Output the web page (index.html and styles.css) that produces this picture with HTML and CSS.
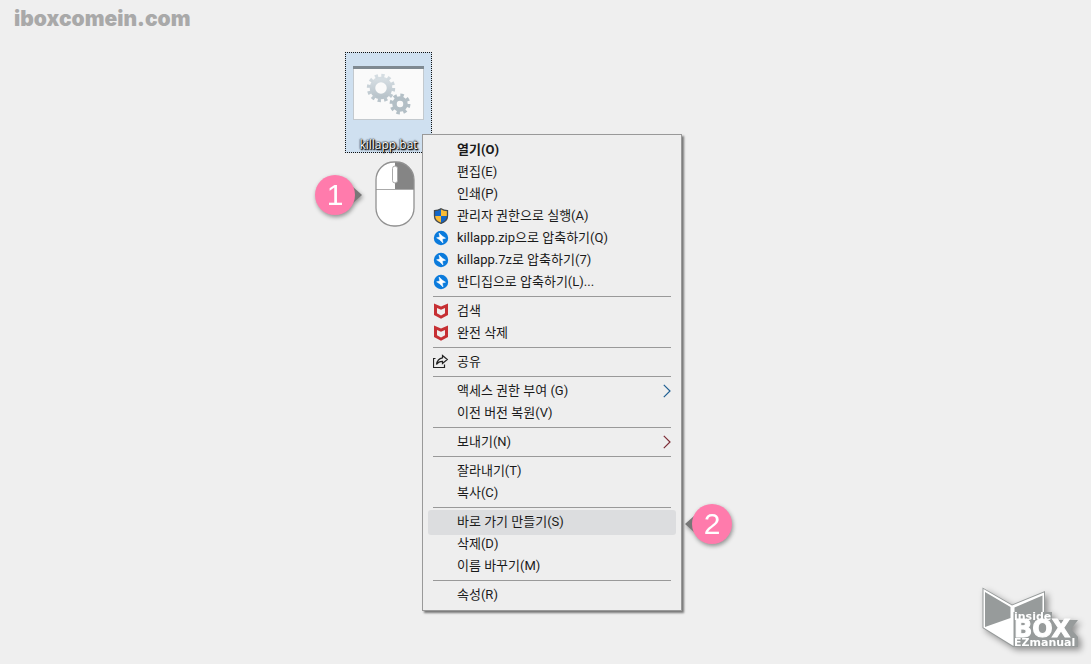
FILE: index.html
```html
<!DOCTYPE html>
<html lang="ko">
<head>
  <meta charset="UTF-8">
  <meta name="viewport" content="width=device-width, initial-scale=1.0">
  <title>killapp.bat</title>
  <link rel="stylesheet" href="styles.css">
</head>
<body>

  <!-- shared icons -->
  <svg class="sprite" aria-hidden="true">
    <symbol id="shield" viewBox="0 0 16 16">
      <path d="M8 0.5C6 2 4 2.5 1.5 2.5V8C1.5 11.5 4 14 8 15.5C12 14 14.5 11.5 14.5 8V2.5C12 2.5 10 2 8 .5z" fill="#fbbc35"/>
      <path d="M8 .5C6 2 4 2.500 1.500 2.500V8H8zM8 8H14.500C14.500 11.500 12 14 8 15.500z" fill="#1467c8"/>
      <path d="M8 .8C6 2.200 4 2.700 1.500 2.700V8C1.500 11.500 4 14 8 15.300C12 14 14.500 11.500 14.500 8V2.700C12 2.700 10 2.200 8 .8z" fill="none" stroke="#444a50" stroke-width="1.300"/>
    </symbol>
    <symbol id="bandizip" viewBox="0 0 16 16">
      <circle cx="8" cy="8" r="7.200" fill="#0b7bdc"/>
      <path d="M6 3L9.500 6.300L12.500 8.200L9.300 9L10 13L6.600 9.700L3.600 7.800L6.800 7z" fill="#fff" stroke="#fff" stroke-width=".5"/>
    </symbol>
    <symbol id="mcafee" viewBox="0 0 16 16">
      <path d="M1 .5L8 3.500L15 .5V12L8 15.800L1 12z" fill="#c62f33"/>
      <path d="M4 5L8 6.800L12 5V10.300L8 12.400L4 10.300z" fill="#eee"/>
    </symbol>
    <symbol id="share" viewBox="0 0 16 16">
      <path d="M.5 4.500V13.500H11.500V10.500M.5 13.500V4.500H2.500" fill="none" stroke="#222" stroke-width="1.200"/>
      <path d="M9.500 1.500L14.300 5.500L9.500 9.500V7.300C7 7.300 5 8 3.500 10.500C4 7 6 4.300 9.500 3.800z" fill="none" stroke="#222" stroke-width="1.200"/>
    </symbol>
    <symbol id="chevron" viewBox="0 0 8 14">
      <path d="M.8 .8L7 7L.8 13.200" fill="none" stroke="currentColor" stroke-width="1.200"/>
    </symbol>
  </svg>

  <main class="desktop">
    <a class="site-name" href="#">iboxcomein.com</a>

    <button class="file" type="button">
      <svg class="file-icon" viewBox="0 0 71 54" aria-hidden="true">
        <defs>
          <linearGradient id="gear" x1="0" y1="0" x2="0" y2="1">
            <stop offset="0" stop-color="#d5dde2"/>
            <stop offset="1" stop-color="#b9c4cb"/>
          </linearGradient>
        </defs>
        <rect x=".5" y=".5" width="70" height="53" fill="#fafafa" stroke="#c3c9ce"/>
        <rect width="71" height="3" fill="#7f8991"/>
        <g fill="none" stroke="url(#gear)">
          <circle cx="28" cy="22" r="8.500" stroke-width="5.500"/>
          <circle cx="28" cy="22" r="12.200" stroke-width="4" stroke-dasharray="3.190 3.190"/>
        </g>
        <g fill="none" stroke="#b3bfc6">
          <circle cx="47" cy="38" r="5.500" stroke-width="4.500"/>
          <circle cx="47" cy="38" r="8.700" stroke-width="3.500" stroke-dasharray="3.420 3.420"/>
        </g>
      </svg>
      <span class="file-name">killapp.bat</span>
    </button>

    <svg class="mouse" viewBox="0 0 40 66" aria-hidden="true">
      <rect x="1" y="1" width="38" height="64" rx="18" fill="#fff"/>
      <path d="M20 1H21A18 18 0 0 1 39 19V28H20z" fill="#858585"/>
      <path d="M1 28.500H39" stroke="#aaa"/>
      <rect x="1" y="1" width="38" height="64" rx="18" fill="none" stroke="#919191" stroke-width="1.300"/>
      <rect x="17.500" y="5" width="5" height="17" rx="2.500" fill="#fff" stroke="#aaa"/>
    </svg>

    <div class="step step-one"><span>1</span></div>
    <div class="step step-two"><span>2</span></div>

    <ul class="context-menu">
      <li><button class="default" type="button">열기(O)</button></li>
      <li><button type="button">편집(E)</button></li>
      <li><button type="button">인쇄(P)</button></li>
      <li><button type="button"><svg class="icon"><use href="#shield"/></svg>관리자 권한으로 실행(A)</button></li>
      <li><button type="button"><svg class="icon"><use href="#bandizip"/></svg>killapp.zip으로 압축하기(Q)</button></li>
      <li><button type="button"><svg class="icon"><use href="#bandizip"/></svg>killapp.7z로 압축하기(7)</button></li>
      <li><button type="button"><svg class="icon"><use href="#bandizip"/></svg>반디집으로 압축하기(L)...</button></li>
      <li class="separator"></li>
      <li><button type="button"><svg class="icon"><use href="#mcafee"/></svg>검색</button></li>
      <li><button type="button"><svg class="icon"><use href="#mcafee"/></svg>완전 삭제</button></li>
      <li class="separator"></li>
      <li><button type="button"><svg class="icon"><use href="#share"/></svg>공유</button></li>
      <li class="separator"></li>
      <li><button type="button">액세스 권한 부여 (G)<svg class="chevron blue"><use href="#chevron"/></svg></button></li>
      <li><button type="button">이전 버전 복원(V)</button></li>
      <li class="separator"></li>
      <li><button type="button">보내기(N)<svg class="chevron red"><use href="#chevron"/></svg></button></li>
      <li class="separator"></li>
      <li><button type="button">잘라내기(T)</button></li>
      <li><button type="button">복사(C)</button></li>
      <li class="separator"></li>
      <li><button class="selected" type="button">바로 가기 만들기(S)</button></li>
      <li><button type="button">삭제(D)</button></li>
      <li><button type="button">이름 바꾸기(M)</button></li>
      <li class="separator"></li>
      <li><button type="button">속성(R)</button></li>
    </ul>

    <svg class="box-logo" viewBox="0 0 100 70" role="img" aria-label="inside BOX EZmanual">
      <path d="M.5 .5L30 17.500L63 4V25H70V33H96L89 42L96 50V60H31L.5 41z" fill="#979b9b"/>
      <path d="M1.500 2L30 18.500L62 5.500V25H31.500V59L1.500 40.500z" fill="#fff"/>
      <path d="M3 5L28.500 20V31L3 40zM32.500 20.500L60.500 8.500V25H32.500zM32 25H70V60H32z" fill="#979b9b"/>
      <g class="logo-text">
        <text x="32" y="33" font-size="11">inside</text>
        <text class="logo-box" x="32" y="50" font-size="24">BOX</text>
        <text x="32" y="59" font-size="11">EZmanual</text>
      </g>
    </svg>
  </main>

</body>
</html>
```
FILE: styles.css
```css
* {
  box-sizing: border-box;
}

body {
  margin: 0;
  background-color: #efefef;
  color: #1a1a1a;
  font-family: Roboto, "Noto Sans CJK KR", sans-serif;
  font-size: 13px;
}

button {
  font: inherit;
  color: inherit;
  border: none;
  background: none;
  padding: 0;
}

.sprite {
  position: absolute;
  width: 0;
  height: 0;
}

.desktop {
  position: relative;
  min-height: 100vh;
  padding: 7px 14px;
  overflow: hidden;
}

.site-name {
  color: #a9a9a9;
  font-family: Inter, sans-serif;
  font-size: 21px;
  font-weight: 900;
  line-height: 24px;
  text-decoration: none;
}

/* selected file */
.file {
  position: absolute;
  left: 345px;
  top: 52px;
  width: 87px;
  height: 101px;
  padding: 13px 0 0;
  display: flex;
  flex-direction: column;
  align-items: center;
  gap: 16px;
  background-color: #cfe0f0;
  border: 1px dotted #111;
}

.file-icon {
  flex-shrink: 0;
  width: 71px;
  height: 54px;
}

.file-name {
  color: #fff;
  font-family: "Open Sans", sans-serif;
  font-size: 12px;
  line-height: 18px;
  text-shadow: 0 0 1px #000, 1px 1px 1px #000, 0 0 2px #000, 1px 1px 2px #000;
}

.mouse {
  position: absolute;
  left: 375px;
  top: 161px;
  width: 40px;
  height: 66px;
}

/* numbered steps */
.step {
  position: absolute;
  width: 40px;
  height: 40px;
  filter: drop-shadow(1px 2px 2px rgba(0, 0, 0, 0.4));
}

.step span {
  position: relative;
  display: block;
  border-radius: 50%;
  background-color: #ff7bac;
  color: #fff;
  font-family: "Liberation Sans", sans-serif;
  font-size: 30px;
  line-height: 40px;
  text-align: center;
}

.step::before {
  content: "";
  position: absolute;
  top: 4px;
  width: 18px;
  height: 32px;
  background-color: #777;
}

.step-one {
  left: 315px;
  top: 175px;
}

.step-one::before {
  right: -7px;
  clip-path: polygon(0 0, 100% 50%, 0 100%);
}

.step-two {
  left: 692px;
  top: 504px;
}

.step-two::before {
  left: -7px;
  clip-path: polygon(100% 0, 0 50%, 100% 100%);
}

/* right click menu */
.context-menu {
  position: absolute;
  left: 422px;
  top: 134px;
  width: 260px;
  margin: 0;
  padding: 3px 5px 5px;
  list-style: none;
  background-color: #eee;
  border: 1px solid #999;
  box-shadow: 2px 2px 2px #777;
}

.context-menu button {
  position: relative;
  display: flex;
  align-items: center;
  width: 100%;
  height: 22px;
  padding-left: 29px;
  padding-bottom: 1px;
  border-radius: 3px;
  text-align: left;
}

.context-menu button:hover {
  background-color: #dcdddf;
}

.context-menu .default {
  font-weight: 700;
}

.context-menu .selected {
  height: 25px;
  margin-bottom: -3px;
  padding-bottom: 4px;
  background-color: #dcdddf;
}

.separator {
  height: 7px;
  margin: 0 5px;
  padding-top: 4px;
}

.separator::before {
  content: "";
  display: block;
  height: 1px;
  background-color: #999;
}

.icon {
  width: 16px;
  height: 16px;
  margin-top: 2px;
  margin-left: -24px;
  margin-right: 8px;
}

.chevron {
  width: 8px;
  height: 14px;
  margin-top: 2px;
  margin-left: auto;
  margin-right: 5px;
}

.blue {
  color: #1f5f92;
}

.red {
  color: #7d2c36;
}

.box-logo {
  position: absolute;
  right: 9px;
  bottom: 7px;
  width: 100px;
  height: 70px;
  overflow: visible;
  filter: drop-shadow(3px 3px 3px rgba(0, 0, 0, 0.4));
}

.logo-text {
  fill: #fff;
  font-family: "DejaVu Sans", sans-serif;
  font-weight: 700;
}

.logo-text .logo-box {
  stroke: #fff;
  stroke-width: 1px;
}
```
